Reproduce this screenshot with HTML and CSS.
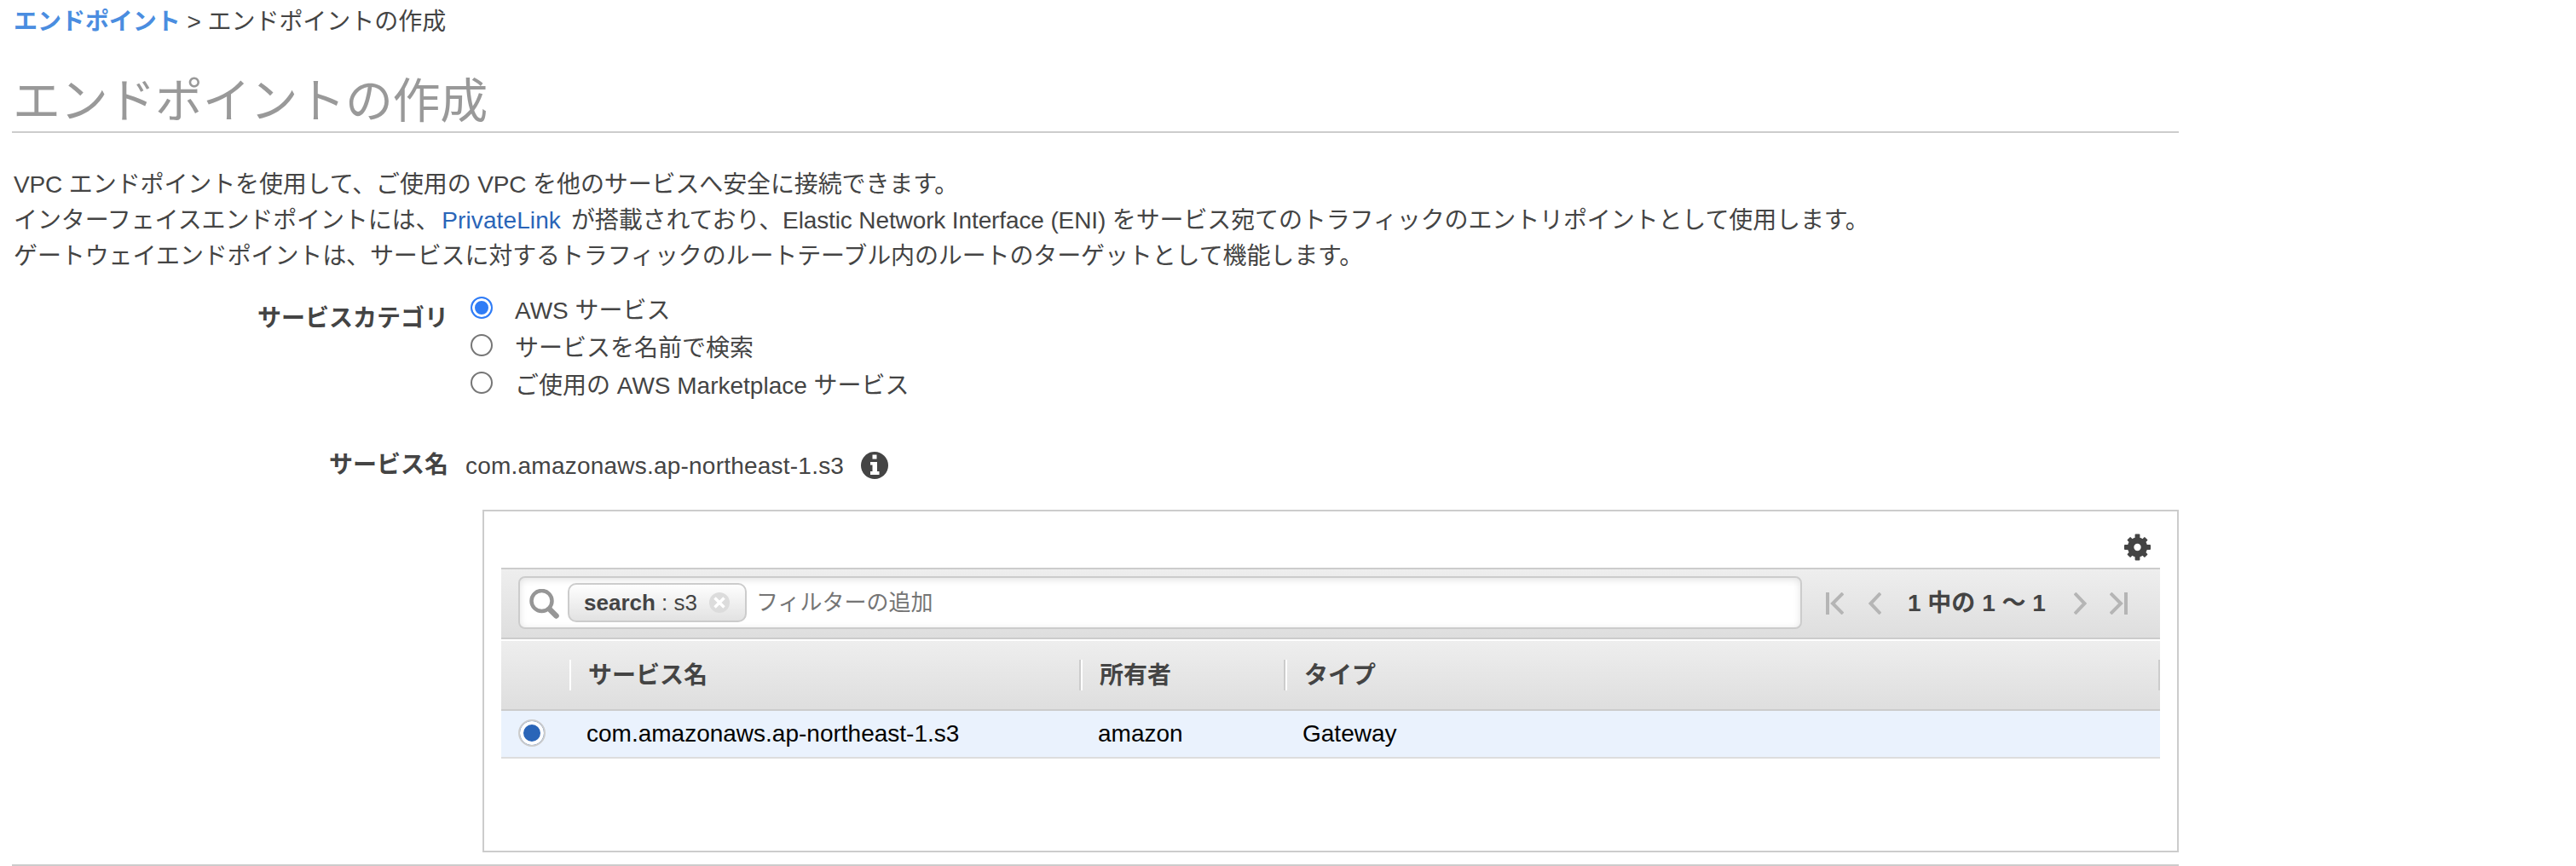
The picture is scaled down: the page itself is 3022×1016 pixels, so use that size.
FILE: index.html
```
<!DOCTYPE html>
<html lang="ja">
<head>
<meta charset="utf-8">
<title>エンドポイントの作成</title>
<link rel="stylesheet" href="styles.css">
</head>
<body>
<main class="page">
  <nav class="breadcrumb"><a href="#">エンドポイント</a> &gt; エンドポイントの作成</nav>
  <h1 class="title">エンドポイントの作成</h1>
  <div class="intro">
    <p>VPC エンドポイントを使用して、ご使用の VPC を他のサービスへ安全に接続できます。</p>
    <p>インターフェイスエンドポイントには、<a class="intro-link" href="#">PrivateLink</a>が搭載されており、Elastic Network Interface (ENI) をサービス宛てのトラフィックのエントリポイントとして使用します。</p>
    <p>ゲートウェイエンドポイントは、サービスに対するトラフィックのルートテーブル内のルートのターゲットとして機能します。</p>
  </div>

  <div class="form-row category">
    <div class="label">サービスカテゴリ</div>
    <div class="options">
      <label class="option"><span class="radio checked"></span>AWS サービス</label>
      <label class="option"><span class="radio"></span>サービスを名前で検索</label>
      <label class="option"><span class="radio"></span>ご使用の AWS Marketplace サービス</label>
    </div>
  </div>

  <div class="form-row service">
    <div class="label">サービス名</div>
    <div class="service-name">com.amazonaws.ap-northeast-1.s3</div>
    <svg class="info" viewBox="0 0 32 32" width="32" height="32"><circle cx="16" cy="16" r="16" fill="#444"/><path fill="#fff" d="M13.500 3.500h5v5h-5zM11 12h8v11h2.500v4H11v-4h2.500v-7.500H11z"/></svg>
  </div>

  <section class="panel">
    <div class="panel-tools">
      <svg class="gear" viewBox="-16 -16 32 32" width="31" height="32"><g fill="#444"><circle r="12"/><g id="teeth"><rect x="-3" y="-16" width="6" height="32" rx="1"/><rect x="-16" y="-3" width="32" height="6" rx="1"/></g><use href="#teeth" transform="rotate(45) scale(.94)"/></g><circle r="4.300" fill="#fff"/></svg>
    </div>
    <div class="toolbar">
      <div class="search">
        <svg class="magnifier" viewBox="0 0 36 36" width="36" height="36"><circle cx="14.500" cy="14" r="12" fill="none" stroke="#969696" stroke-width="4.500"/><path d="M23.500 23.500l8 8" stroke="#969696" stroke-width="6.500" stroke-linecap="round"/></svg>
        <span class="chip"><b>search</b> : s3<svg class="chip-close" viewBox="0 0 24 24" width="24" height="24"><circle cx="12" cy="12" r="12" fill="#dcdcdc"/><path d="M6.500 6.500l11 11M17.500 6.500l-11 11" stroke="#fff" stroke-width="3.500"/></svg></span>
        <span class="placeholder">フィルターの追加</span>
      </div>
      <div class="pager">
        <svg viewBox="0 0 21 26" width="21" height="26"><path d="M2 0v26M20 1L8 13l12 12"/></svg>
        <svg viewBox="0 0 15 26" width="15" height="26"><path d="M14 1L2.500 13L14 25"/></svg>
        <span class="pager-text">1 中の 1 ～ 1</span>
        <svg viewBox="0 0 15 26" width="15" height="26"><path d="M1 1l11.500 12L1 25"/></svg>
        <svg viewBox="0 0 21 26" width="21" height="26"><path d="M19 0v26M1 1l12 12L1 25"/></svg>
      </div>
    </div>
    <div class="grid head">
      <div class="cell"></div><div class="cell">サービス名</div><div class="cell">所有者</div><div class="cell">タイプ</div>
    </div>
    <div class="grid row">
      <div class="cell"><span class="row-radio"></span></div><div class="cell">com.amazonaws.ap-northeast-1.s3</div><div class="cell">amazon</div><div class="cell">Gateway</div>
    </div>
  </section>
</main>
</body>
</html>
```
FILE: styles.css
```
* { box-sizing: border-box; }

body {
  margin: 0;
  background: #fff;
  color: #444;
  font: 28px/42px "Liberation Sans", "Noto Sans CJK JP", sans-serif;
}

svg { display: block; flex: none; }
a { text-decoration: none; }
p { margin: 0; }

.page {
  width: 2542px;
  height: 1016px;
  margin-left: 14px;
  padding-top: 5px;
  border-bottom: 2px solid #ccc;
}

.breadcrumb { padding-left: 2px; letter-spacing: -0.04px; }
.breadcrumb a { color: #4a8de0; font-weight: bold; }

.title {
  height: 77px;
  margin: 32px 0 40px;
  padding-left: 1px;
  border-bottom: 2px solid #ccc;
  color: #999;
  font-size: 56px;
  font-weight: normal;
  line-height: 80px;
  letter-spacing: -0.3px;
}

.intro { padding-left: 2px; letter-spacing: -0.12px; white-space: nowrap; }
.intro-link { margin: 0 12px 0 3px; color: #2a65b8; letter-spacing: 0.1px; }

.form-row { display: flex; line-height: 44px; }
.form-row .label { width: 512px; text-align: right; font-weight: bold; }

.category { margin-top: 20px; }
.category .label { padding-top: 10px; }
.options { margin-left: 26px; }
.option { display: flex; height: 44px; line-height: 45px; }

.radio {
  width: 26px;
  height: 26px;
  margin: 6px 26px 0 0;
  border: 2px solid #767676;
  border-radius: 50%;
}
.radio.checked {
  border-color: #2f7cf6;
  background: #2f7cf6;
  box-shadow: inset 0 0 0 3px #fff;
}

.service { margin-top: 50px; }
.service .label { margin-right: 20px; }
.service-name { line-height: 46px; height: 44px; letter-spacing: 0.22px; }
.info { margin: 6px 0 0 20px; }

.panel {
  width: 1990px;
  height: 402px;
  margin: 30px 0 0 552px;
  padding: 0 20px;
  border: 2px solid #ccc;
}

.panel-tools {
  display: flex;
  justify-content: flex-end;
  height: 66px;
  padding: 26px 11px 0 0;
}

.toolbar {
  display: flex;
  align-items: center;
  justify-content: space-between;
  height: 84px;
  padding: 0 38px 0 20px;
  border: solid #ccc;
  border-width: 2px 0;
  background: linear-gradient(#eee, #dedede);
}

.search {
  display: flex;
  align-items: center;
  width: 1506px;
  height: 62px;
  margin-bottom: 2px;
  padding-left: 11px;
  border: 2px solid #ccc;
  border-radius: 8px;
  background: #fff;
  box-shadow: inset 0 2px 8px rgba(0, 0, 0, 0.12);
  font-size: 26px;
}

.magnifier { margin-top: 4px; }

.chip {
  display: flex;
  align-items: center;
  width: 210px;
  height: 46px;
  margin: 0 11px 0 9px;
  padding-left: 17px;
  border: 2px solid #ccc;
  border-radius: 10px;
  background: linear-gradient(#fefefe, #e2e2e2);
  white-space: pre;
}
.chip-close { margin-left: 14px; }
.placeholder { color: #757575; }

.pager { display: flex; align-items: center; }
.pager svg { fill: none; stroke: #b5b5b5; stroke-width: 4; }
.pager svg:nth-child(2) { margin-left: 29px; }
.pager svg:last-child { margin-left: 27px; }
.pager-text {
  width: 162px;
  margin: 0 33px 0 31px;
  font-weight: bold;
  white-space: nowrap;
}

.grid {
  display: grid;
  grid-template-columns: 80px 600px 240px 1fr;
  align-items: center;
}

.head {
  height: 84px;
  border-top: 2px solid #fff;
  border-bottom: 2px solid #ccc;
  background: linear-gradient(#eee, #dedede) padding-box;
  font-weight: bold;
}
.head .cell {
  height: 36px;
  padding-left: 20px;
  border-left: 2px solid #fff;
  border-right: 2px solid #ccc;
  line-height: 37px;
}
.head .cell:first-child { border: 0; }

.row {
  height: 56px;
  border-bottom: 2px solid #ddd;
  background: #eaf2fd;
  color: #000;
}
.row .cell { padding: 0 0 2px 20px; }
.row .cell:nth-child(n+2) { padding-bottom: 1px; }
.row-radio {
  display: block;
  width: 32px;
  height: 32px;
  border: 2px solid #ccc;
  border-radius: 50%;
  background: #2a65b8;
  box-shadow: inset 0 0 0 4px #fff;
}
```
